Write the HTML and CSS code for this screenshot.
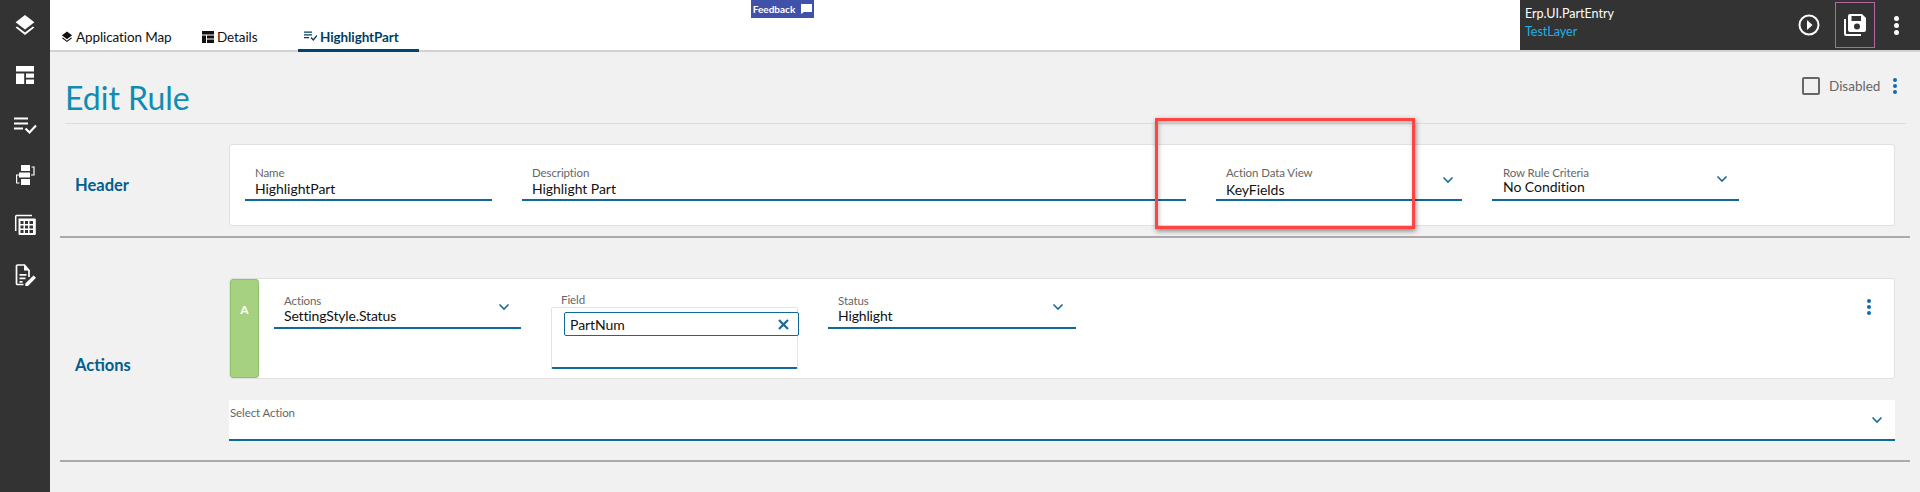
FILE: index.html
```html
<!DOCTYPE html>
<html lang="en">
<head>
<meta charset="utf-8">
<title>Edit Rule</title>
<link rel="stylesheet" href="styles.css">
</head>
<body>
<div class="app">
  <nav class="sidebar">
    <div class="side-item"><svg width="24" height="24" viewBox="0 0 24 24"><path fill="#fff" d="M11.990 19.540l-7.900-6.130L2.600 14.570 12 21.900l9.400-7.330-1.500-1.170zM12 16.500l7.800-6.070L21.400 9.200 12 1.900 2.600 9.200l1.600 1.230z"/></svg></div>
    <div class="side-item"><svg width="24" height="24" viewBox="0 0 24 24"><path fill="#fff" d="M3 3h18v5.500H3zM3 10.500h8.200V21H3zM13 10.500h8v4.300h-8zM13 16.500h8V21h-8z"/></svg></div>
    <div class="side-item"><svg width="24" height="24" viewBox="0 0 24 24"><path fill="#fff" d="M1 4.500h14v2H1zM1 9.500h14v2H1zM1 14.500h9v2H1z"/><path fill="none" stroke="#fff" stroke-width="2.200" d="M12.500 15.500l4 4 6.500-7"/></svg></div>
    <div class="side-item"><svg width="24" height="24" viewBox="0 0 24 24"><path fill="#fff" d="M8 2h9v6H8zM6 9.500h11v5H6zM8 16h9v6H8z"/><path fill="none" stroke="#fff" stroke-width="1.200" d="M18.500 4H21v8h-3M6.500 20H3.600v-8h2.500"/></svg></div>
    <div class="side-item"><svg width="24" height="24" viewBox="0 0 24 24"><path fill="none" stroke="#fff" stroke-width="1.500" d="M2.700 18V3.500a1 1 0 0 1 1-1H19"/><path fill="#fff" fill-rule="evenodd" d="M5.500 5.500h16.500a.8.8 0 0 1 .8.800V21a1 1 0 0 1-1 1H6.500a1 1 0 0 1-1-1zM7.500 8v3h3V8zM12 8v3h3V8zM16.500 8v3h3.500V8zM7.500 12.500v3h3v-3zM12 12.500v3h3v-3zM16.500 12.500v3h3.500v-3zM7.500 17v3h3v-3zM12 17v3h3v-3zM16.500 17v3h3.500v-3z"/></svg></div>
    <div class="side-item"><svg width="24" height="24" viewBox="0 0 24 24"><path fill="none" stroke="#fff" stroke-width="1.700" d="M16 14V7.500L11.500 2H4.500a1 1 0 0 0-1 1v17.500a1 1 0 0 0 1 1h6"/><path fill="#fff" d="M11 1.500L17 7.500h-6zM6.500 11h7v1.700h-7zM6.500 14.500h6v1.700h-6zM6.500 18h3v1.700h-3zM20.500 12.500l2.500 2.300-8 8.200h-2.700v-2.400z"/></svg></div>
  </nav>
  <div class="main">
    <header class="topbar">
      <div class="tabs">
        <div class="tab tab-map"><svg class="tab-icon" width="12" height="12" viewBox="0 0 24 24"><path fill="#111" d="M11.990 19.540l-8.400-6.530L2 14.270l10 7.700 10-7.700-1.630-1.270zM12 16.500l8.400-6.530L22 8.700 12 1 2 8.700l1.600 1.270z"/></svg>Application Map</div>
        <div class="tab tab-details"><svg class="tab-icon" width="12" height="12" viewBox="0 0 12 12"><path fill="#111" d="M0 0h12v3.500H0zM0 4.500h4V12H0zM5 4.500h7V7.500H5zM5 8.500h7V12H5z"/></svg>Details</div>
        <div class="tab tab-active"><svg class="tab-icon" width="13" height="11" viewBox="0 0 13 11"><path fill="#003f63" d="M0 .500h8v1.200H0zM0 3.300h8v1.200H0zM0 6.100h5v1.200H0z"/><path fill="none" stroke="#003f63" stroke-width="1.400" d="M7 6.500l2.300 2.400L13 4.500"/></svg>HighlightPart</div>
      </div>
      <div class="feedback">Feedback<svg width="11" height="10" viewBox="0 0 11 10"><path fill="#fff" d="M0 0h11v8H3L0 10z"/></svg></div>
      <div class="context">
        <div class="context-text">
          <div class="context-name">Erp.UI.PartEntry</div>
          <div class="context-layer">TestLayer</div>
        </div>
        <svg class="play" width="22" height="22" viewBox="0 0 22 22"><circle cx="11" cy="11" r="9.500" fill="none" stroke="#fff" stroke-width="2"/><path fill="#fff" d="M9 6l5.500 5L9 16z"/></svg>
        <div class="save"><svg width="24" height="24" viewBox="0 0 24 24"><path fill="#fff" d="M1 6h2v15h15v2H3a2 2 0 0 1-2-2z"/><path fill="#fff" fill-rule="evenodd" d="M7 1h12l4 4v12a2 2 0 0 1-2 2H7a2 2 0 0 1-2-2V3a2 2 0 0 1 2-2zm1.500 2v5h9.500V3zM14 10.500a3 3 0 1 0 0 6 3 3 0 0 0 0-6z"/></svg></div>
        <div class="dots dots-white"><i></i><i></i><i></i></div>
      </div>
    </header>

    <div class="page-head">
      <h1 class="title">Edit Rule</h1>
      <div class="disabled-row">
        <span class="checkbox"></span>
        <span class="disabled-label">Disabled</span>
        <div class="dots dots-blue"><i></i><i></i><i></i></div>
      </div>
    </div>

    <section class="section section-header">
      <h2 class="section-label">Header</h2>
      <div class="section-body">
        <div class="card card-fields">
          <div class="field w-247"><label>Name</label><div class="value">HighlightPart</div></div>
          <div class="field w-664"><label>Description</label><div class="value">Highlight Part</div></div>
          <div class="field w-246"><label>Action Data View</label><div class="value value-low">KeyFields</div><svg class="chev chev-adv" width="12" height="8" viewBox="0 0 12 8"><path fill="none" stroke="#1a6a9a" stroke-width="1.600" d="M1.500 1.500L6 6l4.500-4.500"/></svg></div>
          <div class="field field-rule w-247"><label>Row Rule Criteria</label><div class="value value-high">No Condition</div><svg class="chev chev-rule" width="12" height="8" viewBox="0 0 12 8"><path fill="none" stroke="#1a6a9a" stroke-width="1.600" d="M1.500 1.500L6 6l4.500-4.500"/></svg></div>
        </div>
      </div>
    </section>

    <section class="section section-actions">
      <h2 class="section-label">Actions</h2>
      <div class="section-body">
        <div class="card card-action">
          <div class="badge">A</div>
          <div class="action-fields">
            <div class="field w-247"><label>Actions</label><div class="value value-high">SettingStyle.Status</div><svg class="chev chev-rule" width="12" height="8" viewBox="0 0 12 8"><path fill="none" stroke="#1a6a9a" stroke-width="1.600" d="M1.500 1.500L6 6l4.500-4.500"/></svg></div>
            <div class="multi w-247">
              <label>Field</label>
              <div class="multi-box">
                <div class="chip"><span>PartNum</span><svg width="11" height="11" viewBox="0 0 11 11"><path fill="none" stroke="#1a6a9a" stroke-width="2.200" d="M1 1l9 9M10 1l-9 9"/></svg></div>
              </div>
            </div>
            <div class="field w-248"><label>Status</label><div class="value value-high">Highlight</div><svg class="chev" width="12" height="8" viewBox="0 0 12 8"><path fill="none" stroke="#1a6a9a" stroke-width="1.600" d="M1.500 1.500L6 6l4.500-4.500"/></svg></div>
          </div>
          <div class="dots dots-blue dots-card"><i></i><i></i><i></i></div>
        </div>
        <div class="select-action">
          <label>Select Action</label>
          <svg class="chev-select" width="12" height="8" viewBox="0 0 12 8"><path fill="none" stroke="#1a6a9a" stroke-width="1.600" d="M1.500 1.500L6 6l4.500-4.500"/></svg>
        </div>
      </div>
    </section>
  </div>
</div>
<div class="callout"></div>
</body>
</html>
```
FILE: styles.css
```css
* { box-sizing: border-box; }
html, body { margin: 0; height: 492px; overflow: hidden; }
body { font-family: "Lato", "Noto Sans", sans-serif; background: #f1f1f1; color: #111; position: relative; }
.app { display: flex; height: 492px; }
.sidebar { width: 50px; flex: none; background: #333; display: flex; flex-direction: column; }
.side-item { height: 50px; display: flex; align-items: center; justify-content: center; }
.main { flex: 1; min-width: 0; display: flex; flex-direction: column; }

.topbar { height: 52px; background: #fff; border-bottom: 2px solid #d2d2d2; display: flex; justify-content: space-between; position: relative; }
.tabs { display: flex; padding-left: 11px; align-items: flex-end; }
.tab { font-size: 13.5px; letter-spacing: -.1px; height: 21px; line-height: 17px; display: flex; align-items: flex-start; color: #111; }
.tab-icon { margin-right: 3px; margin-top: 2px; flex: none; }
.tab-map { width: 141px; }
.tab-details { width: 96px; }
.tab-active { width: 121px; height: 23px; margin-bottom: -2px; padding-left: 6px; border-bottom: 3px solid #00456e; color: #003f63; font-weight: 700; }
.feedback { position: absolute; left: 701px; top: 0; width: 63px; height: 18px; background: #3f51a9; color: #fff; font-size: 10px; font-weight: 700; display: flex; align-items: center; justify-content: center; gap: 6px; }
.context { width: 400px; height: 50px; background: #333; display: flex; align-items: center; padding-left: 5px; }
.context-text { width: 273px; padding-bottom: 4px; }
.context-name { font-size: 12.5px; line-height: 18px; color: #fff; }
.context-layer { font-size: 12.5px; line-height: 18px; color: #1ab3e6; }
.play { margin-left: 0; flex: none; }
.save { width: 40px; height: 46px; margin-left: 15px; border: 1px solid #b06a9e; display: flex; align-items: center; justify-content: center; flex: none; }
.dots { display: flex; flex-direction: column; gap: 2px; flex: none; }
.dots i { width: 4px; height: 4px; border-radius: 50%; display: block; }
.dots-white { margin-left: 19px; }
.dots-white i { background: #fff; width: 5px; height: 5px; }
.dots-blue i { background: #0f6cb0; }

.page-head { height: 72px; margin: 0 14px 0 15px; border-bottom: 1px solid #dcdcdc; display: flex; justify-content: space-between; }
.title { margin: 21px 0 0 0; font-size: 32px; line-height: 50px; font-weight: 400; color: #0f8cb2; }
.disabled-row { display: flex; align-items: center; height: 18px; margin-top: 25px; padding-right: 9px; }
.checkbox { width: 18px; height: 18px; border: 2px solid #666; border-radius: 2px; background: #f1f1f1; }
.disabled-label { font-size: 13.5px; color: #666; margin-left: 9px; width: 62px; }
.disabled-row .dots { margin-left: 2px; }

.section { display: flex; margin: 0 10px; border-bottom: 2px solid #aaa; padding-right: 15px; }
.section-header { height: 114px; padding-top: 20px; margin-top: 0; }
.section-actions { height: 224px; padding-top: 40px; }
.section-label { width: 169px; flex: none; margin: 0; padding-left: 15px; color: #005f8f; font-size: 16.5px; font-weight: 700; }
.section-header .section-label { line-height: 42px; padding-top: 20px; }
.section-actions .section-label { line-height: 24px; padding-top: 75px; }
.section-body { flex: 1; min-width: 0; }

.card { background: #fff; border: 1px solid #e0e0e0; border-radius: 3px; }
.card-fields { height: 82px; display: flex; gap: 30px; padding: 21px 0 0 15px; }
.field { position: relative; height: 35px; border-bottom: 2px solid #0f6a9a; padding-left: 10px; }
.field-rule { padding-left: 11px; }
.w-246 { width: 246px; } .w-247 { width: 247px; } .w-248 { width: 248px; } .w-664 { width: 664px; }
label { display: block; font-size: 11.5px; letter-spacing: -.1px; line-height: 14px; color: #666; }
.value { font-size: 14px; letter-spacing: -.05px; line-height: 18px; color: #111; margin-top: 0; }
.value-low { margin-top: 1px; }
.value-high { margin-top: -2px; }
.card-action .value-high { margin-top: -1px; letter-spacing: -.15px; }
.chev { position: absolute; right: 12px; top: 9px; }
.chev-adv { right: 8px; top: 10px; }
.chev-rule { right: 11px; }

.card-action { height: 101px; display: flex; position: relative; }
.badge { width: 29px; background: #a5d180; border: 1px solid #8fc06b; border-radius: 3px; color: #fff; font-size: 12px; font-weight: 700; text-align: center; padding-top: 22px; flex: none; }
.action-fields { display: flex; gap: 30px; padding: 15px 0 0 15px; align-items: flex-start; }
.card-action .field { height: 35px; }
.multi { position: relative; }
.multi label { padding-left: 10px; margin: -1px 0 1px; line-height: 13px; }
.multi-box { height: 62px; border: 1px solid #e4e4e4; border-bottom: 2px solid #0f6a9a; border-radius: 2px; padding: 4px 0 0 12px; margin-right: 0; background: #fff; }
.chip { width: 235px; height: 24px; border: 1px solid #0f6a9a; border-radius: 2px; display: flex; align-items: center; justify-content: space-between; padding: 0 9px 0 5px; font-size: 14px; letter-spacing: -.05px; background: #fff; }
.dots-card { position: absolute; right: 23px; top: 20px; gap: 2px; }
.select-action { position: relative; height: 41px; margin-top: 21px; background: #fff; border-bottom: 2px solid #0f6a9a; padding: 6px 0 0 1px; }
.chev-select { position: absolute; right: 12px; top: 16px; }

.callout { position: absolute; left: 1155px; top: 118px; width: 260px; height: 111px; border: 3px solid #ff4444; box-shadow: 1px 2px 5px rgba(0,0,0,.45), inset 1px 2px 4px rgba(0,0,0,.25); pointer-events: none; }
```
